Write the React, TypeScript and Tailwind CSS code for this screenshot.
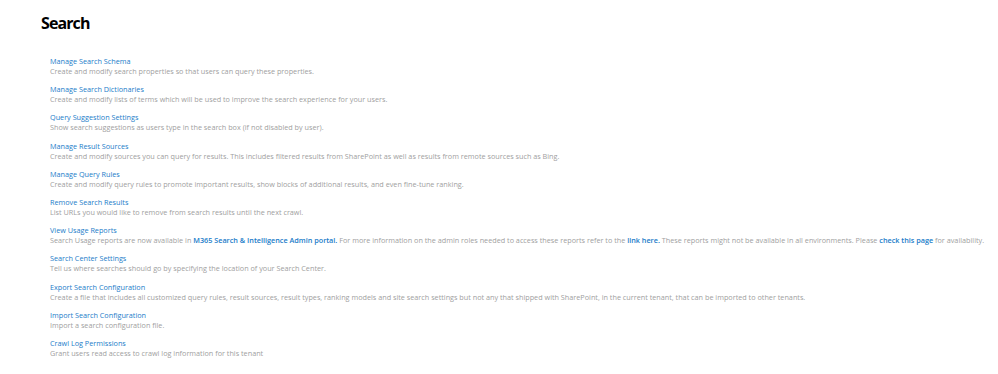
import React from "react"

type Item = { title: string; desc: React.ReactNode }

const A = ({ children }: { children: React.ReactNode }) => (
    <a className="text-[#1a7cc9] font-semibold">{children}</a>
)

const items: Item[] = [
    { title: "Manage Search Schema", desc: "Create and modify search properties so that users can query these properties." },
    { title: "Manage Search Dictionaries", desc: "Create and modify lists of terms which will be used to improve the search experience for your users." },
    { title: "Query Suggestion Settings", desc: "Show search suggestions as users type in the search box (if not disabled by user)." },
    { title: "Manage Result Sources", desc: "Create and modify sources you can query for results. This includes filtered results from SharePoint as well as results from remote sources such as Bing." },
    { title: "Manage Query Rules", desc: "Create and modify query rules to promote important results, show blocks of additional results, and even fine-tune ranking." },
    { title: "Remove Search Results", desc: "List URLs you would like to remove from search results until the next crawl." },
    {
        title: "View Usage Reports",
        desc: (
            <>
                Search Usage reports are now available in <A>M365 Search &amp; Intelligence Admin portal.</A> For more information on the admin roles needed to access these reports refer to the <A>link here.</A> These reports might not be available in all environments. Please <A>check this page</A> for availability.
            </>
        ),
    },
    { title: "Search Center Settings", desc: "Tell us where searches should go by specifying the location of your Search Center." },
    { title: "Export Search Configuration", desc: "Create a file that includes all customized query rules, result sources, result types, ranking models and site search settings but not any that shipped with SharePoint, in the current tenant, that can be imported to other tenants." },
    { title: "Import Search Configuration", desc: "Import a search configuration file." },
    { title: "Crawl Log Permissions", desc: "Grant users read access to crawl log information for this tenant" },
]

export default function App() {
    return (
        <div className="w-[998px] h-[374px] bg-white overflow-hidden font-['Open_Sans',sans-serif]">
            <h1 className="pl-[41px] pt-[11px] text-[16px] leading-[24px] font-bold tracking-[-0.9px] text-black">Search</h1>
            <div className="flex flex-col gap-[8.2px] pl-[50px] pt-[21px]">
                {items.map((it) => (
                    <div key={it.title} className="flex flex-col">
                        <a className="text-[7.25px] leading-[10px] text-[#1a7cc9] whitespace-nowrap">{it.title}</a>
                        <p className="text-[7.25px] leading-[10px] text-[#a0a0a0] whitespace-nowrap">{it.desc}</p>
                    </div>
                ))}
            </div>
        </div>
    )
}
